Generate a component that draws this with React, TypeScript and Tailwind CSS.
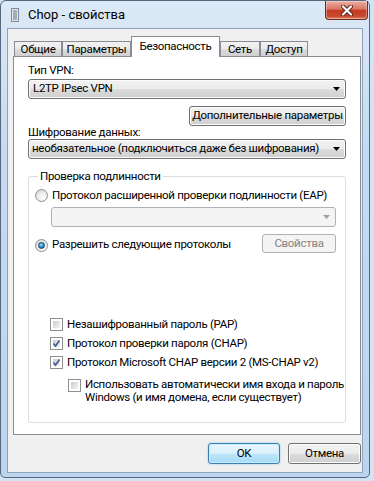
import React from "react";

const btn =
  "flex items-center rounded-[3px] border border-[#707070] bg-[linear-gradient(#f2f2f2_0%,#ebebeb_50%,#dddddd_50%,#cfcfcf_100%)] shadow-[inset_0_0_0_1px_#fcfcfc] text-black";

function Arrow({ color = "#000" }: { color?: string }) {
  return (
    <svg width="7" height="4" viewBox="0 0 7 4" className="shrink-0">
      <path d="M0 0H7L3.5 4Z" fill={color} />
    </svg>
  );
}

function Radio({ checked }: { checked?: boolean }) {
  return (
    <span className="flex h-[13px] w-[13px] shrink-0 items-center justify-center rounded-full border border-[#8e8f8f] bg-[radial-gradient(circle_at_65%_70%,#ffffff,#ececec_45%,#cfcfcf)]">
      {checked && (
        <span className="h-[7px] w-[7px] rounded-full border border-[#17456f] bg-[radial-gradient(circle_at_40%_35%,#9fe3ff,#2a8bd0_55%,#0b4b86)]" />
      )}
    </span>
  );
}

function Check({ checked }: { checked?: boolean }) {
  return (
    <span className="relative flex h-[13px] w-[13px] shrink-0 border border-[#8e8f8f] bg-white p-[2px]">
      <span className="h-full w-full bg-[linear-gradient(135deg,#c6cbd2,#f4f4f4)]" />
      {checked && (
        <svg width="11" height="11" viewBox="0 0 11 11" className="absolute left-[0px] top-[0px]">
          <path d="M2.5 5.5L4.5 8L8.5 2.5" fill="none" stroke="#4a5e98" strokeWidth="1.7" />
        </svg>
      )}
    </span>
  );
}

function Tab({ label, w, active }: { label: string; w: string; active?: boolean }) {
  if (active) {
    return (
      <div
        className={`${w} relative z-10 -mb-[1px] flex h-[21px] items-start justify-center border border-b-0 border-[#898c95] bg-white pt-[1px]`}
      >
        {label}
      </div>
    );
  }
  return (
    <div
      className={`${w} flex h-[15px] items-center justify-center border border-b-0 border-[#898c95] bg-[linear-gradient(#f2f2f2_0%,#ebebeb_50%,#dddddd_50%,#cfcfcf_100%)] leading-[13px]`}
    >
      {label}
    </div>
  );
}

export default function App() {
  return (
    <div className="h-[481px] w-[374px] whitespace-nowrap bg-[#d3e3f3] text-[11.5px] tracking-[-0.3px] text-black font-['Roboto','Noto_Sans',sans-serif]">
      <div className="h-[478px] w-[370px] rounded-t-[6px] rounded-b-[5px] border border-[#56677d] bg-[linear-gradient(#dce9f6,#c6dbf0_30%,#bcd4ed)]">
        <div className="flex h-[27px] justify-between">
          <div className="flex items-center gap-[9px] pl-[10px]">
            <svg width="8" height="14" viewBox="0 0 8 14">
              <rect x="0.5" y="0.5" width="7" height="13" fill="#e3e8ee" stroke="#7f8b99" />
              <path d="M2 3H6M2 5H6M2 7H6M2 9H6M2 11H6" stroke="#5e7288" strokeWidth="1" />
            </svg>
            <span className="text-[13px] tracking-normal">Chop - свойства</span>
          </div>
          <div className="mr-[1px] flex h-[19px] w-[43px] items-center justify-center rounded-b-[4px] border border-t-0 border-[#6d2a1f] bg-[linear-gradient(#eab0a3,#d97563_45%,#c53a20_52%,#c94a2f_85%,#df8a6b)] shadow-[inset_0_0_0_1px_rgba(255,255,255,0.35)]">
            <svg width="12" height="11" viewBox="0 0 12 11">
              <path d="M2 1.5L10 9.5M10 1.5L2 9.5" stroke="#5b2116" strokeWidth="4" strokeLinecap="round" />
              <path d="M2 1.5L10 9.5M10 1.5L2 9.5" stroke="#ffffff" strokeWidth="2.2" strokeLinecap="round" />
            </svg>
          </div>
        </div>

        <div className="mx-[6px] h-[445px] border border-[#8da2bb] bg-[#f0f0f0]">
          <div className="ml-[5px] flex items-end pl-[1px] pt-[7px]">
            <Tab label="Общие" w="w-[48px]" />
            <Tab label="Параметры" w="w-[69px]" />
            <Tab label="Безопасность" w="w-[89px]" active />
            <Tab label="Сеть" w="w-[40px]" />
            <Tab label="Доступ" w="w-[48px]" />
          </div>

          <div className="ml-[5px] flex h-[379px] w-[348px] flex-col border border-[#898c95] bg-white px-[14px] pt-[6px]">
            <div className="leading-[15px]">Тип VPN:</div>
            <div className={`${btn} mt-[1px] h-[20px] justify-between pl-[4px] pr-[5px]`}>
              <span>L2TP IPsec VPN</span>
              <Arrow />
            </div>
            <div className={`${btn} mt-[7px] h-[20px] w-[157px] self-end justify-center`}>
              Дополнительные параметры
            </div>
            <div className="leading-[13px]">Шифрование данных:</div>
            <div className={`${btn} h-[20px] justify-between pl-[3px] pr-[5px]`}>
              <span>необязательное (подключиться даже без шифрования)</span>
              <Arrow />
            </div>

            <fieldset className="mt-[10px] min-w-0 rounded-[3px] border border-[#d5dfe5] pb-[18px] pl-[6px] pr-[9px]">
              <legend className="ml-[3px] px-[2px] leading-[14px]">Проверка подлинности</legend>
              <div className="mt-[5px] flex h-[15px] items-center gap-[4px]">
                <Radio />
                <span>Протокол расширенной проверки подлинности (EAP)</span>
              </div>
              <div className="ml-[16px] mt-[4px] flex h-[20px] items-center justify-end rounded-[3px] border border-[#adb2b5] bg-[#f4f4f4] pr-[5px]">
                <Arrow color="#a0a0a0" />
              </div>
              <div className="mt-[7px] flex h-[19px] items-center justify-between">
                <div className="mt-[3px] flex items-center gap-[4px]">
                  <Radio checked />
                  <span>Разрешить следующие протоколы</span>
                </div>
                <div className="flex h-[19px] w-[74px] items-center justify-center rounded-[3px] border border-[#adb2b5] bg-[#f4f4f4] text-[#838383]">
                  Свойства
                </div>
              </div>

              <div className="ml-[15px] mt-[64px] flex h-[15px] items-center gap-[4px]">
                <Check />
                <span>Незашифрованный пароль (PAP)</span>
              </div>
              <div className="ml-[15px] mt-[4px] flex h-[15px] items-center gap-[4px]">
                <Check checked />
                <span>Протокол проверки пароля (CHAP)</span>
              </div>
              <div className="ml-[15px] mt-[4px] flex h-[15px] items-center gap-[4px]">
                <Check checked />
                <span>Протокол Microsoft CHAP версии 2 (MS-CHAP v2)</span>
              </div>
              <div className="ml-[33px] mt-[9px] flex items-start gap-[4px]">
                <Check />
                <span className="-mt-[1px] leading-[13px]">
                  Использовать автоматически имя входа и пароль
                  <br />
                  Windows (и имя домена, если существует)
                </span>
              </div>
            </fieldset>
          </div>

          <div className="ml-[5px] mt-[8px] flex w-[348px] justify-end gap-[8px]">
            <div className="flex h-[21px] w-[72px] items-center justify-center rounded-[3px] border border-[#3c7fb1] bg-[linear-gradient(#eaf6fd_0%,#d9f0fc_50%,#bee6fd_50%,#a7d9f5_100%)] shadow-[inset_0_0_0_1px_#c7ecfc,0_0_2px_#7cc2ec]">
              OK
            </div>
            <div className={`${btn} h-[21px] w-[73px] justify-center`}>Отмена</div>
          </div>
        </div>
      </div>
    </div>
  );
}
